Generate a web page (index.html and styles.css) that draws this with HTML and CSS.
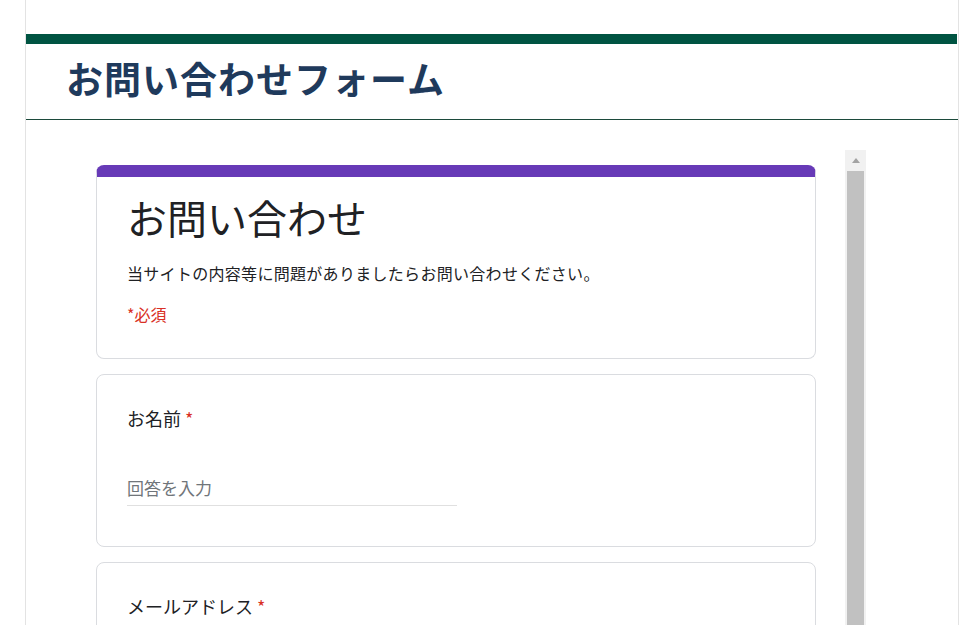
FILE: index.html
```html
<!doctype html>
<html lang="ja">
<head>
<meta charset="utf-8">
<title>お問い合わせフォーム</title>
<link rel="stylesheet" href="styles.css">
</head>
<body>
<div class="page">
	<div class="topbar"></div>
	<div class="header">
		<h1 class="page-title">お問い合わせフォーム</h1>
	</div>
	<div class="frame">
		<div class="form">
			<div class="card card-head">
				<h2 class="form-title">お問い合わせ</h2>
				<p class="form-desc">当サイトの内容等に問題がありましたらお問い合わせください。</p>
				<p class="required-note">*必須</p>
			</div>
			<div class="card question">
				<div class="q-label">お名前 <span class="star">*</span></div>
				<div class="q-input">回答を入力</div>
			</div>
			<div class="card question">
				<div class="q-label">メールアドレス <span class="star">*</span></div>
				<div class="q-input">回答を入力</div>
			</div>
		</div>
		<div class="scrollbar">
			<div class="sb-arrow"></div>
			<div class="sb-thumb"></div>
		</div>
	</div>
</div>
</body>
</html>
```

FILE: styles.css
```css
*{margin:0;padding:0;box-sizing:border-box}
html,body{height:100%;overflow:hidden}
body{background:#fff;font-family:"Noto Sans CJK JP","Noto Sans",sans-serif;color:#202124}
.page{margin-left:25px;width:934px;height:625px;border-left:1px solid #e3e3e3;border-right:1px solid #e3e3e3;padding-top:34px;overflow:hidden}
.topbar{height:10px;background:#005442;margin-right:1px}
.header{height:76px;border-bottom:1px solid #1c4a3b;padding-left:40px;padding-top:8px}
.page-title{font-size:37px;line-height:52px;font-weight:700;color:#1f3a5c;letter-spacing:1px}
.frame{display:flex;margin:30px 0 0 70px;width:770px;height:480px}
.form{flex:1;padding-top:15px;display:flex;flex-direction:column;gap:15px;overflow:hidden}
.card{flex:none;width:720px;background:#fff;border:1px solid #dadce0;border-radius:8px;padding:0 30px}
.card-head{border-top:12px solid #673ab7;height:194px;padding-top:14px}
.form-title{font-size:40px;line-height:52px;font-weight:400;color:#202124}
.form-desc{font-size:16px;line-height:24px;margin-top:18px;letter-spacing:0.3px}
.required-note{font-size:16px;line-height:24px;margin-top:17px;color:#d93025}
.question{height:173px;padding-top:30px}
.q-label{font-size:18px;line-height:26px}
.star{color:#d93025}
.q-input{width:330px;margin-top:44px;font-size:17px;line-height:26px;color:#70757a;padding-bottom:4px;border-bottom:1px solid #e0e0e0}
.scrollbar{flex:none;width:21px;background:#f1f1f1;padding:0 2px}
.sb-arrow{height:21px;position:relative}
.sb-arrow:after{content:"";position:absolute;left:50%;top:8px;margin-left:-4px;border-left:4px solid transparent;border-right:4px solid transparent;border-bottom:5px solid #a3a3a3}
.sb-thumb{height:460px;background:#c1c1c1}
```
